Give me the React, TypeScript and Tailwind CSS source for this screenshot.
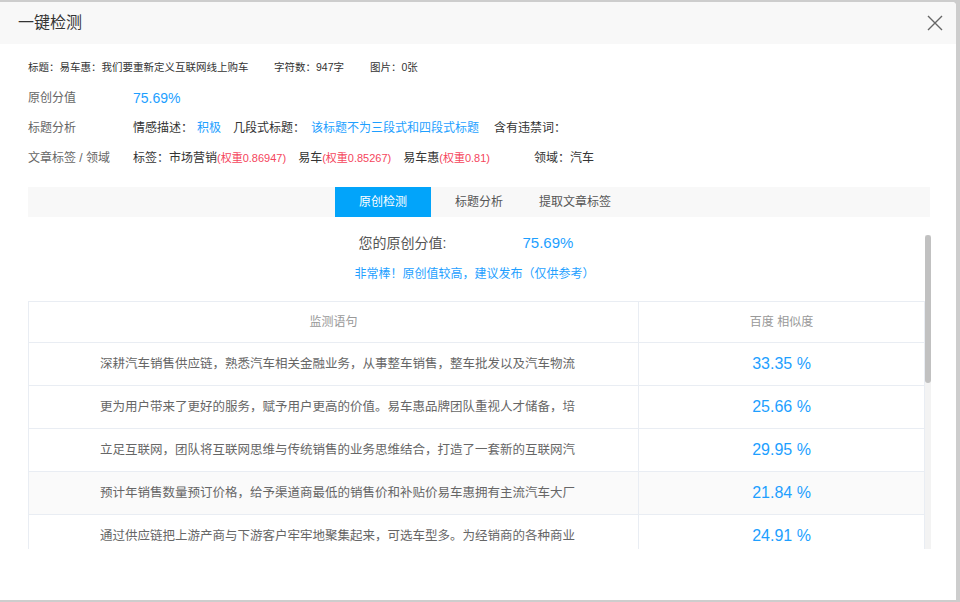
import React from "react"

const rows = [
  { text: "深耕汽车销售供应链，熟悉汽车相关金融业务，从事整车销售，整车批发以及汽车物流", rate: "33.35 %" },
  { text: "更为用户带来了更好的服务，赋予用户更高的价值。易车惠品牌团队重视人才储备，培", rate: "25.66 %" },
  { text: "立足互联网，团队将互联网思维与传统销售的业务思维结合，打造了一套新的互联网汽", rate: "29.95 %" },
  { text: "预计年销售数量预订价格，给予渠道商最低的销售价和补贴价易车惠拥有主流汽车大厂", rate: "21.84 %" },
  { text: "通过供应链把上游产商与下游客户牢牢地聚集起来，可选车型多。为经销商的各种商业", rate: "24.91 %" },
]

const tabs = ["原创检测", "标题分析", "提取文章标签"]

function CloseIcon() {
  return (
    <svg width="16" height="16" viewBox="0 0 16 16" fill="none" stroke="#666" strokeWidth="1.4">
      <path d="M1 1L15 15M15 1L1 15" />
    </svg>
  )
}

function Weight({ value }: { value: string }) {
  return <span className="text-[11px] text-[#f5455c]">(权重{value})</span>
}

export default function App() {
  return (
    <div
      className="w-[960px] h-[602px] bg-[#cdcdcd] pt-[2px] overflow-hidden"
      style={{ fontFamily: '"Liberation Sans", "Noto Sans CJK SC", sans-serif' }}
    >
      <div className="w-[956px] h-[598px] bg-white rounded-tr-[4px] flex flex-col">
        <div className="h-[42px] shrink-0 bg-[#f8f8f8] rounded-tr-[4px] flex items-center justify-between pl-[18px] pr-[13px]">
          <span className="text-[16px] text-[#333]">一键检测</span>
          <CloseIcon />
        </div>

        <div className="px-[28px] pt-[9px] flex flex-col">
          <div className="h-[30px] flex items-center text-[10.5px] text-[#333]">
            <span className="w-[246px]">标题：易车惠：我们要重新定义互联网线上购车</span>
            <span className="w-[96px]">字符数：947字</span>
            <span>图片：0张</span>
          </div>

          <div className="h-[30px] flex items-center text-[12px] text-[#666]">
            <span className="w-[105px]">原创分值</span>
            <span className="text-[14px] text-[#1e9fff]">75.69%</span>
          </div>

          <div className="h-[30px] flex items-center text-[12px] text-[#333]">
            <span className="w-[105px] text-[#666]">标题分析</span>
            <span>情感描述：</span>
            <span className="ml-[4px] text-[#1e9fff]">积极</span>
            <span className="ml-[12px]">几段式标题：</span>
            <span className="ml-[6px] text-[#1e9fff]">该标题不为三段式和四段式标题</span>
            <span className="ml-[15px]">含有违禁词：</span>
          </div>

          <div className="h-[30px] flex items-center text-[12px] text-[#333]">
            <span className="w-[105px] text-[#666]">文章标签 / 领域</span>
            <span>标签：市场营销</span>
            <Weight value="0.86947" />
            <span className="ml-[12px]">易车</span>
            <Weight value="0.85267" />
            <span className="ml-[12px]">易车惠</span>
            <Weight value="0.81" />
            <span className="ml-[44px]">领域：汽车</span>
          </div>

          <div className="mt-[14px] h-[30px] w-[902px] bg-[#f8f8f8] flex justify-center">
            {tabs.map((tab, i) => (
              <div
                key={tab}
                className={
                  i === 0
                    ? "w-[96px] flex items-center justify-center text-[12px] text-white bg-[#02a4fa]"
                    : "w-[96px] flex items-center justify-center text-[12px] text-[#555]"
                }
              >
                {tab}
              </div>
            ))}
          </div>

          <div className="mt-[18px] h-[314px] w-[903px] flex">
            <div className="w-[897px] overflow-hidden">
              <div className="h-[16px] flex items-center justify-center pr-[21px]">
                <span className="text-[14px] text-[#555]">您的原创分值:</span>
                <span className="ml-[76px] text-[15px] text-[#1e9fff]">75.69%</span>
              </div>
              <div className="mt-[15px] h-[16px] flex items-center justify-center pr-[4px] text-[12px] text-[#1e9fff]">
                非常棒！原创值较高，建议发布（仅供参考）
              </div>

              <div className="mt-[19px] border border-[#e9edf3]">
                <div className="h-[41px] flex border-b border-[#e9edf3] text-[12px] text-[#999]">
                  <div className="w-[610px] flex items-center justify-center border-r border-[#e9edf3]">监测语句</div>
                  <div className="flex-1 flex items-center justify-center">百度 相似度</div>
                </div>
                {rows.map((row, i) => (
                  <div
                    key={i}
                    className={
                      i === 3
                        ? "h-[43px] flex border-b border-[#e9edf3] bg-[#fafafa]"
                        : "h-[43px] flex border-b border-[#e9edf3]"
                    }
                  >
                    <div className="w-[610px] flex items-center justify-center pl-[8px] border-r border-[#e9edf3] text-[12.5px] text-[#666] whitespace-nowrap overflow-hidden">
                      {row.text}
                    </div>
                    <div className="flex-1 flex items-center justify-center text-[16px] text-[#1e9fff]">
                      {row.rate}
                    </div>
                  </div>
                ))}
              </div>
            </div>
            <div className="w-[6px] bg-[#f3f3f3]">
              <div className="h-[148px] rounded-[3px] bg-[#c1c1c1]" />
            </div>
          </div>
        </div>
      </div>
    </div>
  )
}
